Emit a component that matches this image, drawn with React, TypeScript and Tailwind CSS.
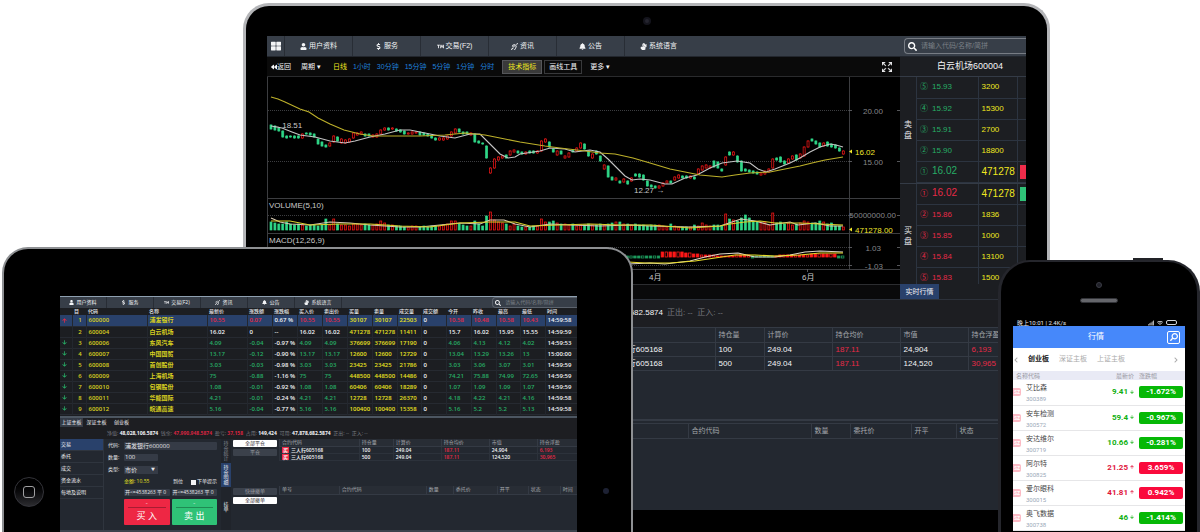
import { clsx } from "clsx";
import type { ReactNode } from "react";
import type { IconType } from "react-icons";
import { BsArrowsFullscreen } from "react-icons/bs";
import {
  FaArrowDown,
  FaArrowUp,
  FaBackward,
  FaBell,
  FaChevronLeft,
  FaChevronRight,
  FaDeaf,
  FaDollarSign,
  FaSearch,
  FaSignLanguage,
  FaSignal,
  FaThLarge,
  FaTrademark,
  FaUser,
  FaWifi,
} from "react-icons/fa";

const NAV: { icon: IconType; label: string }[] = [
  { icon: FaUser, label: "用户资料" },
  { icon: FaDollarSign, label: "服务" },
  { icon: FaTrademark, label: "交易(F2)" },
  { icon: FaDeaf, label: "资讯" },
  { icon: FaBell, label: "公告" },
  { icon: FaSignLanguage, label: "系统语言" },
];

const PERIODS = ["日线", "1小时", "30分钟", "15分钟", "5分钟", "1分钟", "分时"];

const ASKS = [
  ["⑤", "15.93", "3200"],
  ["④", "15.92", "15300"],
  ["③", "15.91", "2700"],
  ["②", "15.90", "18800"],
  ["①", "16.02", "471278"],
];

const BIDS = [
  ["①", "16.02", "471278"],
  ["②", "15.86", "1836"],
  ["③", "15.85", "1000"],
  ["④", "15.84", "13100"],
  ["⑤", "15.83", "1500"],
];

const POSITIONS = [
  ["三人行605168", "100", "249.04", "187.11", "24,904", "6,193"],
  ["三人行605168", "500", "249.04", "187.11", "124,520", "30,965"],
];

// One entry per trading day: direction, then body top and bottom.
const CANDLES =
  "g125-129 g126-130 g128-131 g131-137 g136-138 g136-137 g136-138 g136-138 r134-138 g133-134 g133-135 g134-137 g139-144 g142-146 g145-147 r143-146 r136-142 g137-141 r139-143 r140-143 r139-142 r133-138 r133-135 r132-134 g134-136 g134-136 r135-137 r134-137 r130-134 r128-130 g128-130 r128-129 g129-131 g130-132 g131-134 r133-134 r132-134 r132-133 g132-135 g133-135 g134-136 g135-138 g138-140 r138-140 r138-140 r136-139 r132-136 r129-133 g129-132 g132-134 g132-134 r133-135 g134-142 g141-143 g143-144 g146-158 r168-173 r159-168 r157-160 r156-158 g155-158 r151-155 r150-152 g151-153 g152-154 r152-154 g151-153 g151-153 r151-153 r141-151 r139-142 g142-147 g149-152 r151-155 g151-154 r156-158 r153-157 g150-152 r148-151 r143-148 g144-149 g151-156 r154-158 g151-154 g156-161 r165-169 g166-177 g177-180 r178-180 g181-183 r179-182 g181-184 r178-181 g174-176 g174-177 g175-180 g181-186 g185-187 g186-188 r186-188 r183-186 r181-183 g181-183 r177-180 r175-178 g176-178 g176-178 r176-178 g177-179 r169-174 r166-170 r165-168 r166-168 g161-167 g162-168 g169-171 r157-165 g152-155 r152-155 g156-162 g161-171 g169-171 g170-172 g171-173 g172-174 r173-175 r171-174 r169-172 r159-168 g158-160 g157-162 g161-164 r159-163 r156-159 g155-160 r154-158 r147-156 r141-147 g139-141 g141-144 g143-147 r143-146 g142-146 g144-147 g145-148 g148-151 r151-154"
    .split(" ")
    .map((c) => {
      const [top, bottom] = c.slice(1).split("-").map(Number);
      return { up: c[0] === "r", top, bottom };
    });

// Volume bar heights in base 36, same order as CANDLES.
const VOLUMES =
  "87668656545545b5b65546656556975544334434344456996544964eia87646433344b889766564556556567886656554555" +
  "4364333354754554gba9cfc98785h786756798779867443";

const MACD =
  "3322111111111123333444455555544332222111112222211111122222222333333322";

const MA_FAST =
  "271,126 282,128 292,132 300,135 315,137 330,141 345,143 355,141 370,137 385,134 400,130 410,130 425,133 440,136 455,138 470,134 480,134 490,144 500,154 508,158 515,157 520,154 540,151 550,148 565,149 575,152 590,150 600,152 608,159 616,167 625,176 632,180 640,179 650,180 665,184 672,184 685,178 697,175 710,168 722,163 737,161 750,163 758,169 766,172 775,169 790,163 800,158 810,152 820,147 830,144 836,145 843,147";
const MA_SLOW =
  "271,97 278,99 285,102 300,109 309,112 318,118 330,124 344,130 360,134 373,136 400,136 420,136 445,135 465,133 485,135 500,138 520,142 545,146 560,148 585,151 600,153 615,154 633,158 650,163 670,169 700,175 722,177 735,175 750,173 770,172 780,170 800,166 812,163 825,160 843,157";

const RED = "#ff1818";
const GREEN = "#2fd687";

function Chart() {
  return (
    <svg
      viewBox="267 77 633 207"
      className="block w-full bg-black"
      role="img"
      aria-label="K线图"
      fontSize="8"
    >
      <g stroke="#3c3d40" strokeWidth="1">
        <path d="M267.5 77V284M267 198.5H900M267 233.5H900M267 269.5H900M849.5 77V269" />
        <path
          d="M268 110.5H850M268 161.5H850M268 215.5H850M268 247.5H850M268 265.5H850"
          strokeDasharray="1 1"
        />
        <path
          stroke="#55565a"
          d="M849 110.5h3M849 161.5h3M849 215.5h3M849 247.5h3M849 265.5h3M897 110.5h3M897 161.5h3M897 215.5h3M897 247.5h3M897 265.5h3M655.5 269v3M807.5 269v3"
        />
      </g>

      {CANDLES.map(({ up, top, bottom }, i) => {
        const x = 271 + i * 3.92;
        const h = parseInt(VOLUMES[i] ?? "4", 36);
        const color = up ? RED : GREEN;
        return (
          <g key={i} stroke={color} strokeWidth="0.7">
            <path d={`M${x} ${top - 1}V${bottom + 1}`} strokeOpacity="0.7" />
            <rect
              x={x - 1}
              y={top}
              width="2"
              height={bottom - top}
              fill={up ? "#000" : color}
            />
            <rect
              x={x - 1}
              y={230 - h}
              width="2"
              height={h}
              fill={up ? "#300" : color}
            />
          </g>
        );
      })}

      {MACD.split("").map((v, i) => {
        const x = 572 + i * 3.92;
        const h = Number(v);
        const up = x > 662 && !(x > 750 && x < 772) && x < 836;
        return (
          <rect
            key={i}
            x={x - 1}
            y={up ? 257 - h : 256}
            width="2.4"
            height={up ? h : Math.min(h, 2)}
            fill={i % 3 ? (up ? RED : "#1d9a5c") : "#000"}
            stroke={up ? RED : "#1d9a5c"}
            strokeWidth="0.8"
          />
        );
      })}

      <g fill="none" strokeWidth="1.1">
        <polyline points={MA_FAST} stroke="#c4c4c4" />
        <polyline points={MA_SLOW} stroke="#bdb02a" />
        <polyline
          stroke="#d5c9b0"
          points="271,218 280,222 290,224 310,225 330,222 350,223 370,225 400,227 420,227 440,225 460,223 480,224 490,220 504,220 515,224 530,227 550,224 570,225 600,226 630,225 650,226 690,227 720,226 732,222 741,219 755,221 770,225 790,222 798,225 815,223 830,226 843,226"
        />
        <polyline
          stroke="#d8cf2c"
          points="271,221 290,221 310,225 340,224 370,224 400,226 430,227 460,223 490,222 515,222 530,226 560,225 590,224 620,225 650,225 690,228 720,226 730,224 745,222 760,221 775,223 800,223 820,224 843,225"
        />
        <polyline
          stroke="#e0d8c8"
          points="628,264 650,263 665,264 690,261 705,257 720,254 738,253 755,257 775,257 790,255 805,252 820,251 843,252"
        />
        <polyline
          stroke="#e8dc28"
          points="628,262 645,263 670,263 695,261 715,258 735,255 755,255 775,256 800,255 820,253 843,253"
        />
      </g>

      <g fill="#c9c9c9">
        <text x="272" y="128">← 18.51</text>
        <text x="634" y="193">12.27 →</text>
        <text x="269" y="208">VOLUME(5,10)</text>
        <text x="269" y="243">MACD(12,26,9)</text>
        <text x="649" y="280">4月</text>
        <text x="802" y="280">6月</text>
      </g>
      <g fill="#85868a" textAnchor="end">
        <text x="883" y="114">20.00</text>
        <text x="883" y="165">15.00</text>
        <text x="896" y="218">50000000.00</text>
        <text x="881" y="251">1.03</text>
        <text x="883" y="269">-1.03</text>
      </g>
      <g fill="#f0e62c">
        <text x="855" y="155">16.02</text>
        <text x="855" y="233">471278.00</text>
        <path d="M849 151.500l3-2v4zM849 229.500l3-2v4z" />
      </g>
    </svg>
  );
}

function DepthSide({
  title,
  rows,
  bestIndex,
  color,
  flow,
}: {
  title: string;
  rows: string[][];
  bestIndex: number;
  color: string;
  flow: string;
}) {
  return (
    <div className="flex border-t border-[#343b46]">
      <div className="flex w-4 shrink-0 items-center justify-center text-center text-[8px] leading-[11px] text-gray-200">
        <span className="w-2">{title}</span>
      </div>
      <table className="w-full table-fixed">
        <colgroup>
          <col />
          <col className="w-[39px]" />
          <col className="w-[9px]" />
        </colgroup>
        <tbody>
          {rows.map(([no, price, size], i) => {
            const best = i === bestIndex;
            return (
              <tr key={no} className="h-[21px] border-b border-[#2c3440]">
                <td className={clsx("border-l border-[#2c3440] pl-[3px]", color)}>
                  <span className="mr-1 text-[8px]">{no}</span>
                  <span className={best ? "text-[10px]" : "text-[8px]"}>{price}</span>
                </td>
                <td
                  className={clsx(
                    "border-l border-[#2c3440] pl-[3px] text-[#f0e820]",
                    best ? "text-[10px]" : "text-[8px]",
                  )}
                >
                  {size}
                </td>
                <td className="border-l border-[#2c3440] pl-[2px]">
                  {best && <div className={clsx("h-[14px]", flow)} />}
                </td>
              </tr>
            );
          })}
        </tbody>
      </table>
    </div>
  );
}

function Monitor() {
  return (
    <section className="col-start-1 row-start-1 mt-[3px] mr-[12.5%] ml-[20.25%] rounded-t-[26px] border-x-[3px] border-t-[3px] border-[#b4b5b8] bg-black px-[21px] font-['Liberation_Sans','Noto_Sans_CJK_SC',sans-serif] text-[7px] leading-[10px] text-gray-100">
      <div className="flex h-[30px] items-center justify-center">
        <span className="size-2 rounded-full border-2 border-[#14141c] bg-[#25252f]" />
      </div>

      <nav className="flex h-[21px] border-b border-[#22262d] bg-[#373e48]">
        <button type="button" aria-label="菜单" className="flex w-[17px] items-center justify-center">
          <FaThLarge size={10} />
        </button>
        {NAV.map(({ icon: Icon, label }) => (
          <button
            key={label}
            type="button"
            className="flex w-[68px] items-center justify-center gap-[2px] border-l border-[#282d35]"
          >
            <Icon size={7} />
            {label}
          </button>
        ))}
        <label className="my-[2px] ml-auto flex w-[122px] items-center gap-1 rounded-l border border-r-0 border-[#777c84] px-[3px]">
          <FaSearch size={9} className="shrink-0 text-white" aria-hidden />
          <input
            aria-label="搜索"
            placeholder="请输入代码/名称/简拼"
            className="w-full min-w-0 bg-transparent outline-none placeholder:text-[#7b8087]"
          />
        </label>
      </nav>

      <div className="flex">
        <div className="min-w-0 flex-1">
          <div className="flex h-5 items-center border-b border-[#2a2b2d] bg-[#0a0a0a] pr-2 pl-1">
            <button type="button" className="flex items-center">
              <FaBackward size={6} />
              返回
            </button>
            <button type="button" className="ml-[10px]">周期 ▾</button>
            <div className="ml-3 flex gap-1.5">
              {PERIODS.map((p, i) => (
                <button key={p} type="button" className={i ? "text-[#1f80dc]" : "text-[#f0e620]"}>
                  {p}
                </button>
              ))}
            </div>
            <button
              type="button"
              className="ml-2 h-[14px] w-10 border border-[#55565a] bg-[#3a3a3a] text-[#f0e620]"
            >
              技术指标
            </button>
            <button type="button" className="ml-[2px] h-[14px] w-[38px] border border-[#38393b]">
              画线工具
            </button>
            <button type="button" className="ml-2">更多 ▾</button>
            <button type="button" aria-label="全屏" className="ml-auto">
              <BsArrowsFullscreen size={10} strokeWidth={1} />
            </button>
          </div>
          <Chart />
          <div className="h-[15px] border-t border-[#2c2d30] bg-[#0a0a0b]" />
        </div>

        <aside className="w-[126px] shrink-0 bg-[#1c1e22]">
          <h2 className="h-[19px] pl-[14px] text-center text-[9px] leading-[19px]">白云机场600004</h2>
          <div className="h-[208px] overflow-hidden">
            <DepthSide title="卖盘" rows={ASKS} bestIndex={4} color="text-[#27ad66]" flow="bg-[#ee2c4a]" />
            <DepthSide title="买盘" rows={BIDS} bestIndex={0} color="text-[#e62a47]" flow="bg-[#2fc277]" />
          </div>
          <button type="button" className="block h-[15px] w-[39px] bg-[#29416b]">
            实时行情
          </button>
        </aside>
      </div>

      <div className="bg-[#232830]">
        <p className="h-[28px] border-t border-[#2c313a] bg-[#1d1e22] pr-[289px] text-right text-[8px] leading-[26px] text-[#777a80]">
          <b className="font-normal text-gray-100">682.5874</b>
          <span className="inline-block w-[74px] pl-1 text-left">
            正出: -- &nbsp;正入: --
          </span>
        </p>
        <table className="h-[44px] w-full table-fixed border-t border-b border-[#343a44]">
          <colgroup>
            <col />
            <col className="w-[49px]" />
            <col className="w-[68px]" />
            <col className="w-[68px]" />
            <col className="w-[68px]" />
            <col className="w-[58px]" />
          </colgroup>
          <thead className="text-[#a5a8ad]">
            <tr className="h-[15px] border-b border-[#343a44]">
              <th />
              {["持仓量", "计算价", "持仓均价", "市值", "持仓浮盈"].map((h) => (
                <th
                  key={h}
                  className="border-l border-[#343a44] pl-[3px] text-left font-normal whitespace-nowrap"
                >
                  {h}
                </th>
              ))}
            </tr>
          </thead>
          <tbody className="text-[8px]">
            {POSITIONS.map((row) => (
              <tr key={row[1]} className="h-[14px] border-b border-[#343a44]">
                {row.map((cell, i) => (
                  <td
                    key={i}
                    className={clsx(
                      i === 0 ? "pr-[52px] text-right" : "border-l border-[#343a44] pl-[3px]",
                      (i === 3 || i === 5) && "text-[#e62a47]",
                    )}
                  >
                    {cell}
                  </td>
                ))}
              </tr>
            ))}
          </tbody>
        </table>
        <div className="mt-[48px] h-1 border-t-2 border-[#343a44]" />
        <table className="mb-[70px] w-full table-fixed border-t border-b border-[#343a44] text-[#a5a8ad]">
          <colgroup>
            <col />
            <col className="w-[123px]" />
            <col className="w-[39px]" />
            <col className="w-[61px]" />
            <col className="w-[45px]" />
            <col className="w-[70px]" />
          </colgroup>
          <thead>
            <tr className="h-[15px]">
              {["", "合约代码", "数量", "委托价", "开平", "状态"].map((h) => (
                <th key={h} className="border-l border-[#343a44] pl-[3px] text-left font-normal">
                  {h}
                </th>
              ))}
            </tr>
          </thead>
        </table>
        <div className="h-px" />
      </div>
    </section>
  );
}

const QUOTE_HEADS = [
  "", "目", "代码", "名称", "最新价", "涨跌额", "涨跌幅", "买入价", "卖出价",
  "买量", "卖量", "成交量", "成交额", "今开", "昨收", "最高", "最低", "时间",
];

const QUOTES = [
  ["600000", "浦发银行", "10.55", "0.07", "0.67 %", "30107", "22503", "10.58", "10.48", "10.58", "10.43", "14:59:58"],
  ["600004", "白云机场", "16.02", "0", "--", "471278", "11411", "15.7", "16.02", "15.95", "15.55", "14:59:59"],
  ["600006", "东风汽车", "4.09", "-0.04", "-0.97 %", "376699", "17190", "4.06", "4.13", "4.12", "4.02", "14:59:53"],
  ["600007", "中国国贸", "13.17", "-0.12", "-0.90 %", "12600", "12729", "13.04", "13.29", "13.26", "13", "15:00:00"],
  ["600008", "首创股份", "3.03", "-0.03", "-0.98 %", "23425", "21786", "3.03", "3.06", "3.07", "3.01", "14:59:59"],
  ["600009", "上海机场", "75", "-0.88", "-1.16 %", "448500", "14486", "74.21", "75.88", "74.99", "72.65", "14:59:59"],
  ["600010", "包钢股份", "1.08", "-0.01", "-0.92 %", "60406", "18289", "1.07", "1.09", "1.09", "1.07", "14:59:59"],
  ["600011", "华能国际", "4.21", "-0.01", "-0.24 %", "12728", "26370", "4.18", "4.22", "4.21", "4.16", "14:59:58"],
  ["600012", "皖通高速", "5.16", "-0.04", "-0.77 %", "100400", "15358", "5.16", "5.2", "5.2", "5.13", "14:59:58"],
];

function QuoteTable() {
  return (
    <table className="w-full table-fixed bg-[#1c1e22] whitespace-nowrap">
      <colgroup>
        <col className="w-[12px]" />
        <col className="w-[14px]" />
        <col className="w-[61px]" />
        <col className="w-[60px]" />
        <col className="w-[40px]" />
        <col className="w-[25px]" />
        <col className="w-[25px]" />
        <col className="w-[25px]" />
        <col className="w-[25px]" />
        <col className="w-[25px]" />
        <col className="w-[25px]" />
        <col className="w-[24px]" />
        <col className="w-[25px]" />
        <col className="w-[25px]" />
        <col className="w-[25px]" />
        <col className="w-[24px]" />
        <col className="w-[25px]" />
        <col className="w-[32px]" />
      </colgroup>
      <thead>
        <tr className="h-[7px] text-gray-200">
          {QUOTE_HEADS.map((h, i) => (
            <th key={i} className="pl-[2px] text-left text-[5px] leading-[7px] font-medium">
              {h}
            </th>
          ))}
        </tr>
      </thead>
      <tbody className="font-semibold">
        {QUOTES.map((q, r) => {
          const [code, name, last, diff, pct, lot, volume, open, close, high, low, time] = q;
          const tone = r === 0 ? "text-[#e62a47]" : r === 1 ? "text-gray-100" : "text-[#27ad66]";
          const cells: [ReactNode, string][] = [
            [
              r === 1 ? "" : r === 0 ? <FaArrowUp size={5} /> : <FaArrowDown size={5} />,
              tone,
            ],
            [r + 1, "text-[#d8d020] text-center"],
            [code, "text-[#d8d020]"],
            [name, "text-[#d8d020]"],
            [last, tone],
            [diff, tone],
            [pct, "text-gray-100"],
            [last, tone],
            [last, tone],
            [lot, "text-[#e8e020]"],
            [lot, "text-[#e8e020]"],
            [volume, "text-[#e8e020]"],
            ["0", "text-gray-100"],
            [open, tone],
            [close, tone],
            [high, tone],
            [low, tone],
            [time, "text-gray-100"],
          ];
          return (
            <tr
              key={code}
              className={clsx("h-[11px] border-b border-[#262a31]", r === 0 && "bg-[#29416b]")}
            >
              {cells.map(([cell, cls], i) => (
                <td
                  key={i}
                  className={clsx("pl-[2px] leading-[10px]", i > 0 && "border-l border-[#23272e]", cls)}
                >
                  {cell}
                </td>
              ))}
            </tr>
          );
        })}
      </tbody>
    </table>
  );
}

function OrderForm() {
  return (
    <form className="w-[118px] shrink-0 border-l border-[#2f353e] px-1 pt-[2px] text-gray-200">
      <div className="flex h-[11px] items-center">
        <label htmlFor="code" className="w-4 text-[5px]">代码:</label>
        <input
          id="code"
          defaultValue="浦发银行600000"
          className="h-2 min-w-0 flex-1 rounded-[1px] bg-[#353b46] px-[1px] leading-[8px]"
        />
      </div>
      <div className="flex h-3 items-center">
        <label htmlFor="amount" className="w-4 text-[5px]">数量:</label>
        <input
          id="amount"
          defaultValue="100"
          className="h-[7px] w-[34px] rounded-[1px] bg-[#353b46] px-[1px] leading-[7px]"
        />
      </div>
      <div className="flex h-3 items-center">
        <label htmlFor="kind" className="w-4 text-[5px]">类型:</label>
        <select
          id="kind"
          className="h-2 w-[27px] appearance-none rounded-l-[1px] bg-[#353b46] px-[1px] leading-[8px]"
        >
          <option>市价</option>
        </select>
        <span className="h-2 w-[7px] bg-[#353b46] text-[4px] leading-[8px]" aria-hidden>▼</span>
      </div>
      <div className="ml-4 flex h-[13px] items-center text-[5px]">
        <span className="text-[#e8e020]">金额: 10.55</span>
        <span className="ml-auto">到位</span>
        <label className="ml-2 flex items-center gap-[1px]">
          <input
            type="checkbox"
            defaultChecked
            className="size-[5px] appearance-none border border-gray-100 checked:bg-gray-100"
          />
          下单提示
        </label>
      </div>
      <div className="ml-4 grid grid-cols-2 gap-[2px] text-[5px]">
        <span className="h-[7px] rounded-[1px] bg-[#353b46] px-[1px] leading-[7px] whitespace-nowrap">
          开&lt;=4538263 平 0
        </span>
        <span className="h-[7px] rounded-[1px] bg-[#353b46] px-[1px] leading-[7px] whitespace-nowrap">
          开&lt;=4538263 平 0
        </span>
        <button
          type="button"
          className="mt-[1px] flex h-[26px] flex-col items-center rounded-[1px] bg-[#ee2744] px-1 text-[9px] leading-[15px] text-white"
        >
          <span className="h-[9px] w-full border-b border-[#a81c32] text-[6px] leading-[8px]">-</span>
          买 入
        </button>
        <button
          type="button"
          className="mt-[1px] flex h-[26px] flex-col items-center rounded-[1px] bg-[#2fc277] px-1 text-[9px] leading-[15px] text-white"
        >
          <span className="h-[9px] w-full border-b border-[#1f8a53] text-[6px] leading-[8px]">-</span>
          卖 出
        </button>
      </div>
    </form>
  );
}

function TabletPositions() {
  return (
    <div className="min-w-0 flex-1 text-[5px] whitespace-nowrap text-[#a5a8ad]">
      <table className="w-full table-fixed">
        <colgroup>
          <col />
          <col className="w-[34px]" />
          <col className="w-[48px]" />
          <col className="w-[48px]" />
          <col className="w-[48px]" />
          <col className="w-[40px]" />
        </colgroup>
        <thead>
          <tr className="h-2 border-b border-[#343a44] bg-[#282d35]">
            {["合约代码", "持仓量", "计算价", "持仓均价", "市值", "持仓浮盈"].map((h) => (
              <th
                key={h}
                className="border-l border-[#343a44] pl-[2px] text-left leading-[7px] font-normal"
              >
                {h}
              </th>
            ))}
          </tr>
        </thead>
        <tbody className="font-semibold text-gray-100">
          {POSITIONS.map((row) => (
            <tr key={row[1]} className="h-[7px] border-b border-[#2c323b]">
              {row.map((cell, i) => (
                <td
                  key={i}
                  className={clsx(
                    "border-l border-[#2c323b] pl-[2px] leading-[6px]",
                    (i === 3 || i === 5) && "text-[#e62a47]",
                  )}
                >
                  {i === 0 && <span className="mr-[2px] bg-[#ee2744] px-[1px]">买</span>}
                  {cell}
                </td>
              ))}
            </tr>
          ))}
        </tbody>
      </table>
      <table className="mt-[25px] w-full table-fixed">
        <colgroup>
          <col />
          <col className="w-[87px]" />
          <col className="w-[27px]" />
          <col className="w-[44px]" />
          <col className="w-[31px]" />
          <col className="w-[32px]" />
          <col className="w-[17px]" />
        </colgroup>
        <thead>
          <tr className="h-2 border-b border-[#343a44] bg-[#282d35]">
            {["单号", "合约代码", "数量", "委托价", "开平", "状态", "时间"].map((h) => (
              <th
                key={h}
                className="border-l border-[#343a44] pl-[2px] text-left leading-[7px] font-normal"
              >
                {h}
              </th>
            ))}
          </tr>
        </thead>
      </table>
    </div>
  );
}

function Tablet() {
  return (
    <section className="col-start-1 row-start-1 mt-[247px] ml-[2px] flex w-[52.6%] overflow-hidden rounded-t-[26px] border-x-2 border-t-2 border-[#8e9093] bg-black font-['Open_Sans','Noto_Sans_CJK_SC',sans-serif] text-[6px] text-gray-100">
      <div className="w-[56px] shrink-0 pt-[228px] pl-[10px]">
        <button
          type="button"
          aria-label="主屏幕"
          className="flex size-[30px] items-center justify-center rounded-full border border-[#34343a] bg-linear-to-b from-black to-[#2c2c30]"
        >
          <span className="size-3 rounded-[3px] border border-[#a0a0a2]" />
        </button>
      </div>

      <div className="mt-[47px] flex min-w-0 flex-1 flex-col bg-[#232830]">
        <nav className="flex h-3 border-t border-[#8fa0b0] bg-[#373e48] text-[5px] leading-[11px]">
          {NAV.map(({ icon: Icon, label }) => (
            <button
              key={label}
              type="button"
              className="flex w-[47px] items-center justify-center gap-[2px] border-r border-[#282d35]"
            >
              <Icon size={5} />
              {label}
            </button>
          ))}
          <label className="ml-auto flex w-[85px] items-center gap-1 rounded-l border border-r-0 border-[#5b626c] px-[2px]">
            <FaSearch size={6} className="shrink-0" aria-hidden />
            <input
              aria-label="搜索"
              placeholder="请输入代码/名称/简拼"
              className="w-full min-w-0 bg-transparent outline-none placeholder:text-[#7b8087]"
            />
          </label>
        </nav>
        <QuoteTable />
        <div className="h-[3px] border-b-2 border-[#4c5661] bg-[#1c1e22]" />

        <div className="flex h-[9px] bg-[#1d1e22] text-[5px] leading-[9px]">
          <button type="button" className="w-[23px] bg-[#343b46]">上证主板</button>
          <button type="button" className="w-[27px]">深证主板</button>
          <button type="button" className="w-[23px]">创业板</button>
        </div>
        <p className="h-3 bg-[#1d1e22] pl-[47px] text-[5px] leading-[12px] whitespace-pre text-[#777a80]">
          净值: <b className="text-gray-100">48,028,106.5874</b>
          {"  "}钱余: <b className="text-[#d42440]">47,990,948.5874</b>
          {"  "}盈亏: <b className="text-[#d42440]">37,158</b>
          {"  "}占用: <b className="text-gray-100">149,424</b>
          {"  "}可用: <b className="text-gray-100">47,878,682.5874</b>
          {"  "}正出: --{"  "}正入: --
        </p>

        <div className="flex flex-1">
          <div className="flex w-[43px] shrink-0 flex-col text-[5px]">
            {["交易", "委托", "成交", "资金流水", "每地及说明"].map((item, i) => (
              <button
                key={item}
                type="button"
                className={clsx(
                  "h-3 border-b border-[#2f353e] pl-[1px] text-left leading-[11px]",
                  i === 0 && "bg-[#29416b]",
                )}
              >
                {item}
              </button>
            ))}
          </div>
          <OrderForm />
          <div className="flex w-[10px] shrink-0 flex-col bg-[#20242b] text-[5px] leading-[5px]">
            <button type="button" className="h-6 px-[2px] text-[#85898f]">持仓统计</button>
            <button type="button" className="h-6 bg-[#29416b] px-[2px]">持仓明细</button>
            <button type="button" className="mt-3 h-4 px-[2px]">挂单</button>
          </div>
          <div className="flex w-[48px] shrink-0 flex-col px-[2px] pt-[1px] text-[5px] leading-[7px]">
            <button type="button" className="h-[7px] rounded-[1px] bg-white text-[#333]">全部平仓</button>
            <button type="button" className="mt-[2px] h-[7px] rounded-[1px] bg-[#3b414b] text-[#9a9da2]">平仓</button>
            <button type="button" className="mt-[32px] h-[7px] rounded-[1px] bg-[#3b414b] text-[#9a9da2]">快捷撤单</button>
            <button type="button" className="mt-[2px] h-[7px] rounded-[1px] bg-white text-[#333]">全部撤单</button>
          </div>
          <TabletPositions />
        </div>
        <div className="h-[2px] bg-[#3b424c]" />
      </div>

      <div className="w-[54px] shrink-0 pt-[239px] pl-[26px]">
        <span className="block size-[6px] rounded-full bg-[#1d2133]" />
      </div>
    </section>
  );
}

const STOCKS = [
  { name: "艾比森", code: "300389", price: "9.41", pct: "-1.672%" },
  { name: "安车检测", code: "300572", price: "59.4", pct: "-0.967%" },
  { name: "安达维尔", code: "300719", price: "10.66", pct: "-0.281%" },
  { name: "阿尔特", code: "300825", price: "21.25", pct: "3.659%" },
  { name: "爱尔眼科", code: "300015", price: "41.81", pct: "0.942%" },
  { name: "奥飞数据", code: "300738", price: "46", pct: "-1.414%" },
];

function Phone() {
  return (
    <section className="col-start-1 row-start-1 mt-[258px] flex w-[202px] flex-col justify-self-end font-['Roboto','Noto_Sans_CJK_SC',sans-serif] text-[7px] text-[#444]">
      <span className="ml-[135px] h-[2px] w-[30px] bg-[#222327]" />
      <div className="flex-1 rounded-t-[32px] border-x-[3px] border-t-2 border-[#25262c] bg-black px-[12px]">
        <div className="flex h-[58px] flex-col items-center pt-5">
          <span className="size-[6px] rounded-full border border-[#3a3b44] bg-[#1f2028]" />
          <span className="mt-[10px] h-[5px] w-[38px] rounded-full border border-[#333439] bg-[#65666b]" />
        </div>
        <div className="flex h-[6px] items-center justify-between px-1 pr-2 text-[6px] leading-[6px] text-gray-200">
          <span>晚上10:01 | 2.4K/s</span>
          <span className="flex gap-[3px]">
            <FaSignal size={6} />
            <FaWifi size={6} />
            <span className="h-[5px] w-[11px] rounded-[2px] border border-gray-300" />
          </span>
        </div>
        <header className="flex h-[22px] items-center bg-[#4688fa] pr-[5px] text-white">
          <h1 className="flex-1 pl-3 text-center text-[8px]">行情</h1>
          <button
            type="button"
            aria-label="搜索"
            className="flex size-[13px] items-center justify-center rounded-[2px] border border-white"
          >
            <FaSearch size={8} className="-scale-x-100" />
          </button>
        </header>
        <div className="flex h-[23px] items-center bg-white text-[#aaa]">
          <FaChevronLeft size={6} />
          <button type="button" className="ml-[9px] font-bold text-[#222]">创业板</button>
          <button type="button" className="ml-[10px]">深证主板</button>
          <button type="button" className="ml-[10px]">上证主板</button>
          <FaChevronRight size={6} className="mr-[6px] ml-auto" />
        </div>
        <table className="w-full table-fixed bg-white">
          <colgroup>
            <col className="w-[13px]" />
            <col />
            <col className="w-[50px]" />
            <col className="w-[51px]" />
          </colgroup>
          <thead>
            <tr className="h-[9px] bg-[#e9eaf5] text-[6px] leading-[9px] text-[#9a9aa4]">
              <th colSpan={2} className="pl-[3px] text-left font-normal">名称代码</th>
              <th className="text-right font-normal">最新价</th>
              <th className="pl-[5px] text-left font-normal">涨跌幅</th>
            </tr>
          </thead>
          <tbody>
            {STOCKS.map(({ name, code, price, pct }) => {
              const down = pct.startsWith("-");
              const Arrow = down ? FaArrowDown : FaArrowUp;
              return (
                <tr key={code} className="h-[25px] border-b border-[#e6e6e8]">
                  <td>
                    <span className="block h-2 w-2 rounded-r-[2px] bg-[#fcb9c4] text-center text-[5px] leading-[8px] font-bold text-white">
                      SZ
                    </span>
                  </td>
                  <td className="pt-[2px] whitespace-nowrap">
                    <div className="leading-[11px]">{name}</div>
                    <div className="text-[6px] leading-[9px] text-[#9aa9b8]">{code}</div>
                  </td>
                  <td
                    className={clsx(
                      "text-right text-[8px] font-bold whitespace-nowrap",
                      down ? "text-[#12b012]" : "text-[#e0143c]",
                    )}
                  >
                    {price} <Arrow size={4} className="inline" />
                  </td>
                  <td className="pr-[2px] pl-[5px]">
                    <div
                      className={clsx(
                        "h-3 rounded-[2px] text-center text-[8px] leading-[12px] font-bold text-white",
                        down ? "bg-[#06b806]" : "bg-[#fa0a3c]",
                      )}
                    >
                      {pct}
                    </div>
                  </td>
                </tr>
              );
            })}
          </tbody>
        </table>
      </div>
    </section>
  );
}

export default function App() {
  return (
    <main className="grid min-h-screen grid-cols-1 overflow-hidden bg-white">
      <Monitor />
      <Tablet />
      <Phone />
    </main>
  );
}
